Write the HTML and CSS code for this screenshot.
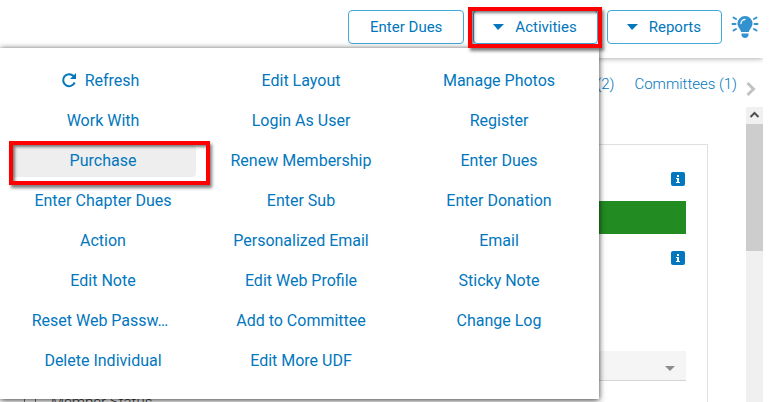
FILE: index.html
```html
<!DOCTYPE html>
<html lang="en">
<head>
    <meta charset="UTF-8">
    <meta name="viewport" content="width=device-width, initial-scale=1.0">
    <title>Member Profile</title>
    <link rel="stylesheet" href="styles.css">
</head>
<body>
    <div class="app">
        <header class="toolbar">
            <button class="tool-button" type="button">Enter Dues</button>
            <div class="menu-holder marked">
                <button class="tool-button with-caret" type="button"><span class="caret"></span>Activities</button>
            </div>
            <button class="tool-button with-caret" type="button"><span class="caret"></span>Reports</button>
            <button class="tips" type="button" aria-label="Tips">
                <svg viewBox="0 0 28 24" width="28" height="24">
                    <path fill="#3292d0" d="M14 1a7.500 7.500 0 0 0-7.500 7.500c0 3.500 2.700 5 3.700 8.500h7.600c1-3.500 3.700-5 3.700-8.500A7.500 7.500 0 0 0 14 1z"/>
                    <path fill="#3292d0" d="M10.500 18.500h7v1.500c0 1.500-1.500 3-3.500 3s-3.500-1.500-3.500-3z"/>
                    <path fill="none" stroke="#fff" stroke-width="1.300" stroke-linecap="round" d="M10 8.500a4 4 0 0 1 4-4"/>
                    <path fill="none" stroke="#3292d0" stroke-width="2" stroke-linecap="round" d="M1.500 9h3M23.500 9h3M2.500 2.500l2.500 1.500M25.500 2.500L23 4M2.500 15.500L5 14M25.500 15.500L23 14"/>
                </svg>
            </button>
        </header>

        <nav class="tabs">
            <a href="#">(2)</a>
            <a href="#">Committees (1)</a>
            <button class="tabs-next" type="button" aria-label="More tabs">
                <svg viewBox="0 0 10 16" width="10" height="16"><path fill="none" stroke="#c2c2c2" stroke-width="3" d="M1.500 2L7.500 8l-6 6"/></svg>
            </button>
        </nav>

        <main class="content">
            <section class="card">
                <button class="info" type="button" aria-label="Information">
                    <svg viewBox="0 0 14 14" width="14" height="14"><path fill="#fff" d="M6 3h2v2H6zM5 6h3v4h1v1H5v-1h1V7H5z"/></svg>
                </button>
                <div class="status-bar"></div>
                <button class="info" type="button" aria-label="Information">
                    <svg viewBox="0 0 14 14" width="14" height="14"><path fill="#fff" d="M6 3h2v2H6zM5 6h3v4h1v1H5v-1h1V7H5z"/></svg>
                </button>
                <div class="picker">
                    <select aria-label="Member type"><option></option></select>
                </div>
                <label class="check"><input type="checkbox">Member Status</label>
            </section>
            <div class="scrollbar">
                <svg viewBox="0 0 17 17" width="17" height="17"><path fill="none" stroke="#505050" stroke-width="2" d="M4.500 10l4-4 4 4"/></svg>
                <div class="thumb"></div>
            </div>
        </main>

        <div class="activities-menu">
            <button class="refresh" type="button"><svg viewBox="0 0 16 16" width="16" height="16"><path fill="none" stroke="#0277bd" stroke-width="2" d="M13.700 10.500A6 6 0 1 1 12.500 4"/><path fill="#0277bd" d="M15 1v6H9z"/></svg>Refresh</button>
            <button type="button">Edit Layout</button>
            <button type="button">Manage Photos</button>
            <button type="button">Work With</button>
            <button type="button">Login As User</button>
            <button type="button">Register</button>
            <div class="selected marked"><button type="button">Purchase</button></div>
            <button type="button">Renew Membership</button>
            <button type="button">Enter Dues</button>
            <button type="button">Enter Chapter Dues</button>
            <button type="button">Enter Sub</button>
            <button type="button">Enter Donation</button>
            <button type="button">Action</button>
            <button type="button">Personalized Email</button>
            <button type="button">Email</button>
            <button type="button">Edit Note</button>
            <button type="button">Edit Web Profile</button>
            <button type="button">Sticky Note</button>
            <button class="shortened" type="button">Reset Web Passw…</button>
            <button type="button">Add to Committee</button>
            <button type="button">Change Log</button>
            <button type="button">Delete Individual</button>
            <button type="button">Edit More UDF</button>
        </div>
    </div>
</body>
</html>
```
FILE: styles.css
```css
* {
    box-sizing: border-box;
}

body {
    margin: 0;
    background-color: #fff;
    color: #333;
    font-family: Roboto, sans-serif;
    font-size: 15px;
}

button {
    padding: 0;
    border: none;
    background: none;
    color: #0277bd;
    font-family: inherit;
    font-size: inherit;
    cursor: pointer;
}

.app {
    position: relative;
    display: flex;
    flex-direction: column;
    height: 100vh;
    margin-right: 14px;
    overflow: hidden;
}

/* Top toolbar */
.toolbar {
    display: flex;
    justify-content: flex-end;
    gap: 9px;
    padding: 10px 4px 14px;
    box-shadow: 0 1px 5px rgba(0, 0, 0, 0.3);
}

.tool-button {
    display: flex;
    align-items: center;
    justify-content: center;
    height: 34px;
    padding: 0 21px;
    border: 1px solid #3fa9dc;
    border-radius: 4px;
}

.with-caret {
    gap: 11px;
    padding: 0 20px 0 19px;
}

.caret {
    border: 6px solid transparent;
    border-top-color: #0277bd;
    border-bottom: none;
    border-left-width: 5px;
}

.tips {
    display: flex;
    align-items: center;
}

/* Red call-out frames */
.marked {
    position: relative;
}

.marked::after {
    content: "";
    position: absolute;
    z-index: 3;
    inset: -3px -4px -4px -5px;
    border: 4px solid #f00;
    box-shadow: 2px 3px 3px rgba(0, 0, 0, 0.5), inset 2px 2px 3px rgba(0, 0, 0, 0.5);
    pointer-events: none;
}

/* Tabs */
.tabs {
    display: flex;
    align-items: center;
    justify-content: flex-end;
    gap: 20px;
    height: 49px;
    padding: 2px 7px 0 0;
}

.tabs a {
    color: #0277bd;
    font-weight: 300;
    text-decoration: none;
}

.tabs-next {
    display: flex;
    margin: 10px 0 0 -11px;
}

/* Page content */
.content {
    display: flex;
    flex: 1;
    min-height: 0;
}

.card {
    display: flex;
    flex: 1;
    flex-direction: column;
    align-items: stretch;
    height: 400px;
    margin: 37px 38px 0 0;
    padding: 27px 21px 0 24px;
    border: 1px solid #e0e0e0;
    border-left: none;
}

.info {
    display: flex;
    align-self: flex-end;
    margin-right: 1px;
    border-radius: 2px;
    background-color: #0277bd;
}

.status-bar {
    height: 33px;
    margin: 15px 0 17px;
    background-color: #228b22;
}

.picker {
    position: relative;
    margin-top: 86px;
}

.picker select {
    display: block;
    width: 100%;
    height: 30px;
    border: none;
    border-bottom: 1px solid #d5d5d5;
    border-radius: 0;
    appearance: none;
    background-color: #f5f5f5;
}

.picker::after {
    content: "";
    position: absolute;
    top: 15px;
    right: 11px;
    border: 5px solid transparent;
    border-top-color: #8c8c8c;
    border-bottom: none;
    pointer-events: none;
}

.check {
    display: flex;
    align-items: center;
    gap: 15px;
    margin-top: 12px;
    font-weight: 300;
}

.check input {
    width: 12px;
    height: 12px;
    margin: 0;
}

.scrollbar {
    width: 17px;
    background-color: #f0f0f0;
}

.scrollbar svg {
    display: block;
}

.thumb {
    height: 127px;
    background-color: #cdcdcd;
}

/* Activities drop-down */
.activities-menu {
    position: absolute;
    top: 48px;
    left: 0;
    display: grid;
    grid-template-columns: repeat(3, 186px);
    gap: 8px 12px;
    padding: 17px 7px 22px 10px;
    background-color: #fff;
    box-shadow: 0 1px 6px rgba(0, 0, 0, 0.8);
    font-size: 16px;
}

.activities-menu button {
    display: flex;
    align-items: center;
    justify-content: center;
    gap: 8px;
    width: 100%;
    height: 32px;
    padding-bottom: 2px;
    border-radius: 4px;
}

.activities-menu .refresh,
.activities-menu .shortened {
    padding-right: 6px;
}

.selected button {
    background-color: #eee;
}

.selected::after {
    inset: -4px -14px -8px -1px;
}
```
